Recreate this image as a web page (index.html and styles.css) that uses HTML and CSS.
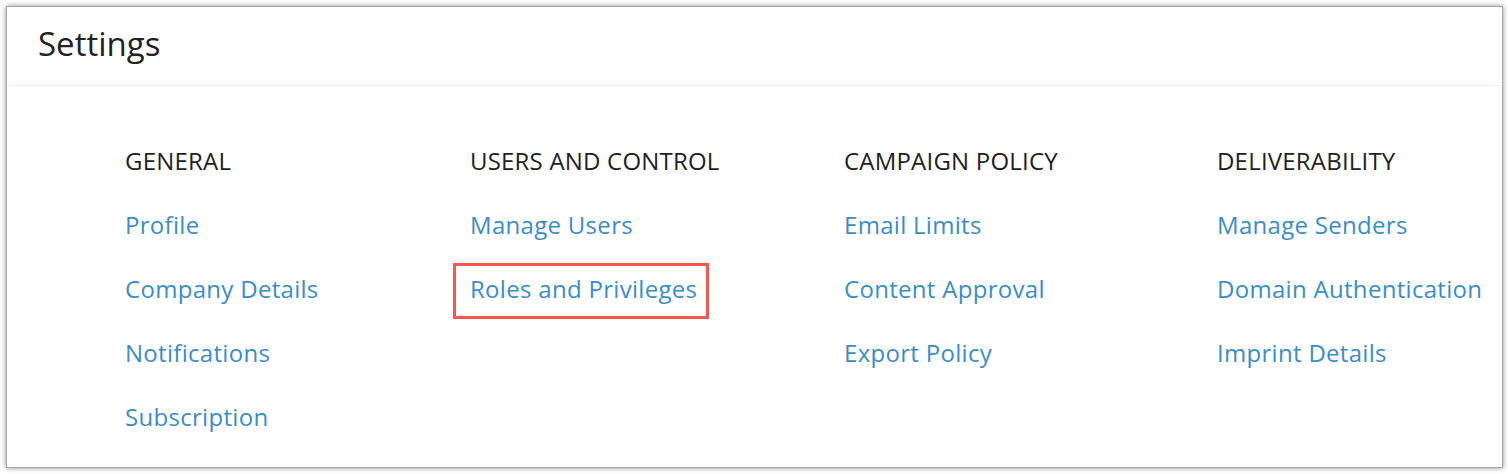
FILE: index.html
```html
<!DOCTYPE html>
<html lang="en">
<head>
<meta charset="utf-8">
<title>Settings</title>
<link rel="stylesheet" href="styles.css">
</head>
<body>
<div class="panel">
  <div class="panel-header">
    <h1 class="title">Settings</h1>
  </div>
  <div class="panel-body">
    <div class="col">
      <h2 class="col-title">GENERAL</h2>
      <a class="link" href="#">Profile</a>
      <a class="link" href="#">Company Details</a>
      <a class="link" href="#">Notifications</a>
      <a class="link" href="#">Subscription</a>
    </div>
    <div class="col">
      <h2 class="col-title">USERS AND CONTROL</h2>
      <a class="link" href="#">Manage Users</a>
      <a class="link highlighted" href="#">Roles and Privileges</a>
    </div>
    <div class="col">
      <h2 class="col-title">CAMPAIGN POLICY</h2>
      <a class="link" href="#">Email Limits</a>
      <a class="link" href="#">Content Approval</a>
      <a class="link" href="#">Export Policy</a>
    </div>
    <div class="col">
      <h2 class="col-title">DELIVERABILITY</h2>
      <a class="link" href="#">Manage Senders</a>
      <a class="link" href="#">Domain Authentication</a>
      <a class="link" href="#">Imprint Details</a>
    </div>
  </div>
</div>
</body>
</html>
```

FILE: styles.css
```css
html, body {
  margin: 0;
  padding: 0;
  background: #ffffff;
}

body {
  padding: 7px 6px 7px 7px;
  font-family: "Open Sans", "Liberation Sans", sans-serif;
}

.panel {
  height: 460px;
  box-sizing: border-box;
  background: #ffffff;
  box-shadow: 0 0 0 1px #a8a8a8, 0 0 5px 1px rgba(0, 0, 0, 0.45);
}

.panel-header {
  height: 79px;
  box-sizing: border-box;
  border-bottom: 1px solid #eaf1f7;
  display: flex;
  align-items: center;
  padding-left: 31px;
}

.title {
  margin: 0;
  font-size: 33px;
  font-weight: 400;
  color: #222222;
  line-height: 1;
  padding-bottom: 6px;
}

.panel-body {
  display: grid;
  grid-template-columns: 345px 374px 373px auto;
  padding: 58px 0 0 118px;
}

.col {
  display: flex;
  flex-direction: column;
  align-items: flex-start;
}

.col-title {
  margin: 0 0 30px 0;
  font-size: 24px;
  font-weight: 400;
  color: #222222;
  line-height: 34px;
  letter-spacing: 0.2px;
}

.link {
  position: relative;
  font-size: 24px;
  color: #3a8ec7;
  text-decoration: none;
  line-height: 34px;
  margin-bottom: 30px;
  letter-spacing: 0.3px;
}

.highlighted::after {
  content: "";
  position: absolute;
  top: -9px;
  bottom: -13px;
  left: -17px;
  right: -12px;
  border: 3px solid #f5594c;
}
```
